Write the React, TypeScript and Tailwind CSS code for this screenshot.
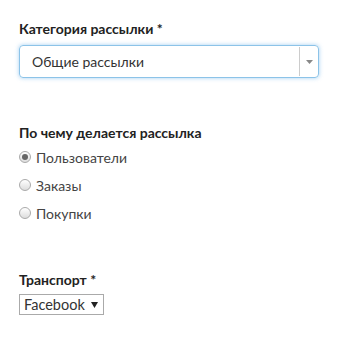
export default function App() {
  const options = ['Пользователи', 'Заказы', 'Покупки']
  return (
    <div className="w-[345px] h-[354px] bg-white pl-[19px] pt-[21px] text-[#333]" style={{ fontFamily: 'Lato, "Open Sans", sans-serif' }}>
      {/* Категория */}
      <div className="text-[14px] font-bold leading-[16px] text-[#222]">Категория рассылки *</div>
      <div className="mt-[8px] w-[300px] h-[33px] flex items-stretch rounded-[4px] border border-[#8cc3e8] shadow-[0_0_4px_rgba(102,175,233,0.6)]">
        <div className="flex-1 flex items-center pl-[12px] text-[14px] text-[#333]">Общие рассылки</div>
        <div className="w-[19px] border-l border-[#ccc] my-[1px] flex items-center justify-center">
          <svg width="7" height="4" viewBox="0 0 7 4"><path d="M0 0h7L3.5 4z" fill="#888" /></svg>
        </div>
      </div>

      {/* По чему */}
      <div className="mt-[47px] text-[14px] font-bold leading-[16px] text-[#222]">По чему делается рассылка</div>
      <div className="mt-[7px] flex flex-col gap-[10px]">
        {options.map((o, i) => (
          <label key={o} className="flex items-center gap-[5px] h-[18px] text-[14px] text-[#444]">
            <span className="w-[12px] h-[12px] rounded-full border border-[#aaa] bg-gradient-to-b from-[#fff] to-[#ddd] flex items-center justify-center">
              {i === 0 && <span className="w-[6px] h-[6px] rounded-full bg-[#666]" />}
            </span>
            {o}
          </label>
        ))}
      </div>

      {/* Транспорт */}
      <div className="mt-[50px] text-[14px] font-bold leading-[16px] text-[#222]">Транспорт *</div>
      <div className="mt-[6px] inline-flex items-center h-[21px] pl-[4px] pr-[5px] border border-[#aaa] text-[14.5px] text-[#333] gap-[6px]">
        Facebook
        <svg width="7" height="6" viewBox="0 0 7 6"><path d="M0 0h7L3.5 6z" fill="#222" /></svg>
      </div>
    </div>
  )
}
